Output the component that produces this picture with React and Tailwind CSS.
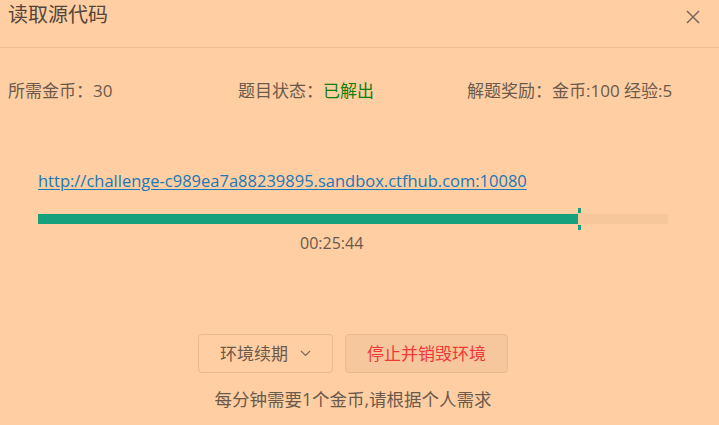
import React from "react";

const F = { fontFamily: '"Segoe UI", "Open Sans", "Noto Sans CJK SC", sans-serif' };

export default function App() {
  return (
    <div className="w-[719px] h-[425px] bg-[#ffcea2] text-[#6b5a4c] overflow-hidden" style={F}>
      <div className="h-[48px] border-b border-[#efbd92] flex items-start justify-between pl-2 pr-[19px]">
        <div className="pt-[3px] text-[20px] leading-[24px] text-[#54463b]">读取源代码</div>
        <svg className="mt-[10px]" width="14" height="14" viewBox="0 0 14 14">
          <path d="M1 1 L13 13 M13 1 L1 13" stroke="#7a6a5d" strokeWidth="1.5" fill="none" />
        </svg>
      </div>
      <div className="mt-[32px] pl-2 grid grid-cols-[230px_229px_1fr] text-[17px] leading-[22px]">
        <div>所需金币：30</div>
        <div>
          题目状态：<span className="text-[#0f7f0f]">已解出</span>
        </div>
        <div>解题奖励：金币:100 经验:5</div>
      </div>
      <div className="ml-[38px] w-[630px]">
        <div className="mt-[68px] text-[16.5px] leading-[22px]">
          <a href="#" className="text-[#2277b5] underline underline-offset-2">
            http://challenge-c989ea7a88239895.sandbox.ctfhub.com:10080
          </a>
        </div>
        <div className="mt-[16px] relative h-[22px] flex items-center">
          <div className="w-full h-[10px] bg-[#f5c79b] flex">
            <div className="w-[540px] h-full bg-[#16a07c]" />
          </div>
          <div className="absolute left-[540px] top-0 w-[3px] h-[5px] bg-[#16a07c]" />
          <div className="absolute left-[540px] bottom-0 w-[3px] h-[5px] bg-[#16a07c]" />
        </div>
        <div className="mt-[2px] pl-[262px] text-[16px] leading-[22px]">00:25:44</div>
        <div className="mt-[80px] flex justify-center gap-[12px]">
          <button className="h-[39px] w-[135px] rounded-[4px] border border-[#e9b98f] bg-[#ffcea2] text-[17px] text-[#6b5a4c] flex items-center justify-center gap-[12px]">
            <span>环境续期</span>
            <svg width="11" height="7" viewBox="0 0 11 7">
              <path d="M1 1 L5.5 5.5 L10 1" stroke="#7a6a5d" strokeWidth="1.2" fill="none" />
            </svg>
          </button>
          <button className="h-[39px] w-[163px] rounded-[4px] border border-[#e9b98f] bg-[#f6c79c] text-[17px] text-[#f0383a]">
            停止并销毁环境
          </button>
        </div>
        <div className="mt-[15px] text-center text-[17.5px] leading-[22px]">每分钟需要1个金币,请根据个人需求</div>
      </div>
    </div>
  );
}
